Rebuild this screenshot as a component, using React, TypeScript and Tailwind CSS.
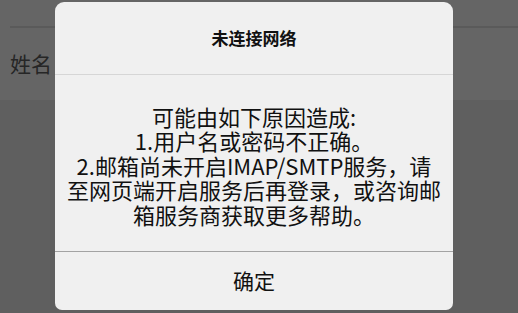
import React from 'react';

const font = { fontFamily: '"Noto Sans CJK SC", "Noto Sans", sans-serif' };

export default function App() {
  return (
    <div className="relative w-[518px] h-[313px] overflow-hidden bg-[#656565]" style={font}>
      {/* Page behind the dimmed overlay */}
      <div className="flex flex-col">
        <div className="h-[26px]" />
        <div className="ml-[10px] h-[2px] bg-[#5a5a5a]" />
        <div className="h-[72px] flex items-center pl-[10px] text-[21px] text-[#262626]">姓名</div>
        <div className="h-[213px] bg-[#5f5f5f]" />
      </div>

      {/* Dialog */}
      <div className="absolute left-[55px] top-[2px] w-[398px] h-[308px] bg-[#f0f0f0] rounded-t-[9px] rounded-b-[7px] flex flex-col overflow-hidden">
        <div className="h-[72px] flex items-center justify-center text-[17px] font-bold text-[#111]">
          未连接网络
        </div>
        <div className="h-px bg-[#d6d6d6]" />
        <div className="h-[176px] flex items-center justify-center text-center text-[22px] leading-[24.5px] text-[#111] pt-[4px]">
          <div>
            可能由如下原因造成:
            <br />
            1.用户名或密码不正确。
            <br />
            2.邮箱尚未开启IMAP/SMTP服务，请
            <br />
            至网页端开启服务后再登录，或咨询邮
            <br />
            箱服务商获取更多帮助。
          </div>
        </div>
        <div className="h-px bg-[#a3a3a3]" />
        <div className="flex-1 flex items-center justify-center text-[21px] text-[#111]">确定</div>
      </div>
    </div>
  );
}
